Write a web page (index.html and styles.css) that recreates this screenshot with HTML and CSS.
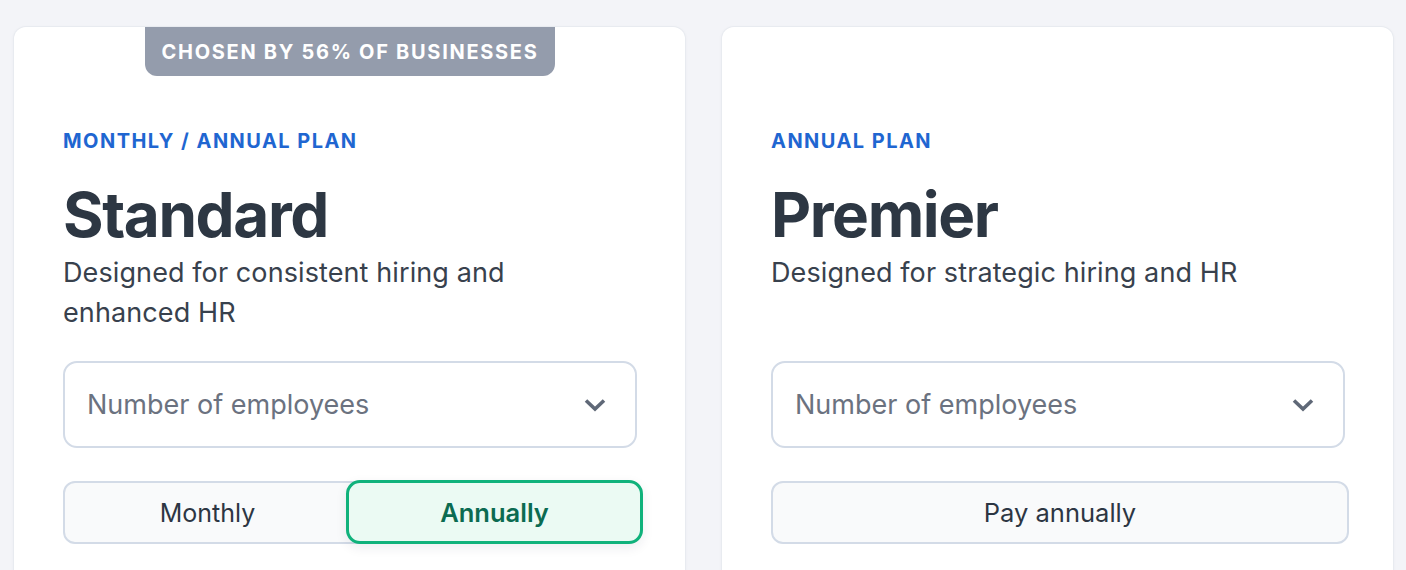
FILE: index.html
```html
<!DOCTYPE html>
<html lang="en">

<head>
	<meta charset="UTF-8">
	<meta name="viewport" content="width=device-width, initial-scale=1.0">
	<title>Plans</title>
	<link rel="stylesheet" href="styles.css">
</head>

<body>

	<div class="plans">
		<div class="plan">
			<div class="badge">Chosen by 56% of businesses</div>
			<p class="plan-type">Monthly / Annual plan</p>
			<h2 class="plan-name">Standard</h2>
			<p class="plan-desc">Designed for consistent hiring and enhanced HR</p>
			<div class="select">
				<span>Number of employees</span>
				<svg class="chevron" width="24" height="14" viewBox="0 0 24 14">
					<path d="M3 2.5 L12 11 L21 2.5" fill="none" stroke="currentColor" stroke-width="3.6" />
				</svg>
			</div>
			<div class="toggle">
				<button class="toggle-option">Monthly</button>
				<button class="toggle-option active">Annually</button>
			</div>
		</div>

		<div class="plan">
			<p class="plan-type">Annual plan</p>
			<h2 class="plan-name">Premier</h2>
			<p class="plan-desc">Designed for strategic hiring and HR</p>
			<div class="select">
				<span>Number of employees</span>
				<svg class="chevron" width="24" height="14" viewBox="0 0 24 14">
					<path d="M3 2.5 L12 11 L21 2.5" fill="none" stroke="currentColor" stroke-width="3.6" />
				</svg>
			</div>
			<button class="pay-btn">Pay annually</button>
		</div>
	</div>

</body>

</html>
```

FILE: styles.css
```css
body {
	font-family: 'Inter', 'Roboto', sans-serif;
	margin: 0;
	padding: 0;
	background: #f3f4f8;
	color: #2d3743;
	overflow: hidden;
}

.plans {
	display: grid;
	grid-template-columns: 1fr 1fr;
	gap: 37px;
	padding: 27px 13px 0 14px;
}

.plan {
	position: relative;
	background: white;
	border-radius: 12px;
	box-shadow: 0 0 0 1px #e8ebf0, 0 1px 4px rgba(30, 40, 60, 0.06);
	padding: 101px 48px 40px 49px;
	min-height: 470px;
}

.badge {
	position: absolute;
	top: 0;
	left: 131px;
	width: 410px;
	height: 49px;
	box-sizing: border-box;
	background: #949cac;
	color: white;
	border-radius: 0 0 12px 12px;
	font-size: 20px;
	font-weight: 700;
	letter-spacing: 1.7px;
	text-transform: uppercase;
	text-align: center;
	line-height: 50px;
}

.plan-type {
	margin: 0;
	color: #1f66d1;
	font-size: 20px;
	font-weight: 700;
	letter-spacing: 1.45px;
	text-transform: uppercase;
	line-height: 26px;
}

.plan-name {
	margin: 25px 0 0;
	font-size: 62px;
	font-weight: 700;
	line-height: 72px;
	letter-spacing: -1.4px;
	color: #2d3743;
}

.plan-desc {
	margin: 2px 0 0;
	max-width: 470px;
	min-height: 80px;
	font-size: 27px;
	line-height: 40px;
	letter-spacing: 0.1px;
	color: #38414d;
}

.select {
	display: flex;
	align-items: center;
	justify-content: space-between;
	margin-top: 28px;
	height: 87px;
	box-sizing: border-box;
	padding: 0 28px 0 22px;
	border: 2px solid #d3dbe7;
	border-radius: 14px;
	font-size: 27px;
	color: #6b7280;
}

.chevron {
	color: #5f6877;
}

.toggle {
	display: grid;
	grid-template-columns: 1fr 1fr;
	margin-top: 33px;
	height: 63px;
	box-sizing: border-box;
	border: 2px solid #d3dbe7;
	border-radius: 12px;
	background: #f9fafb;
}

.toggle-option {
	font-family: inherit;
	font-size: 25px;
	color: #2d3643;
	background: none;
	border: none;
	padding: 0;
	cursor: pointer;
}

.toggle-option.active {
	margin: -3px -8px -2px -4px;
	border: 3px solid #10b27b;
	border-radius: 14px;
	background: #ebfaf3;
	color: #0b6b51;
	font-size: 25.5px;
	font-weight: 600;
	box-shadow: 0 4px 12px rgba(20, 40, 60, 0.08);
}

.pay-btn {
	display: block;
	margin-top: 33px;
	width: calc(100% + 4px);
	height: 63px;
	font-family: inherit;
	font-size: 25.5px;
	color: #2d3643;
	background: #f9fafb;
	border: 2px solid #d3dbe7;
	border-radius: 12px;
	cursor: pointer;
}
```
